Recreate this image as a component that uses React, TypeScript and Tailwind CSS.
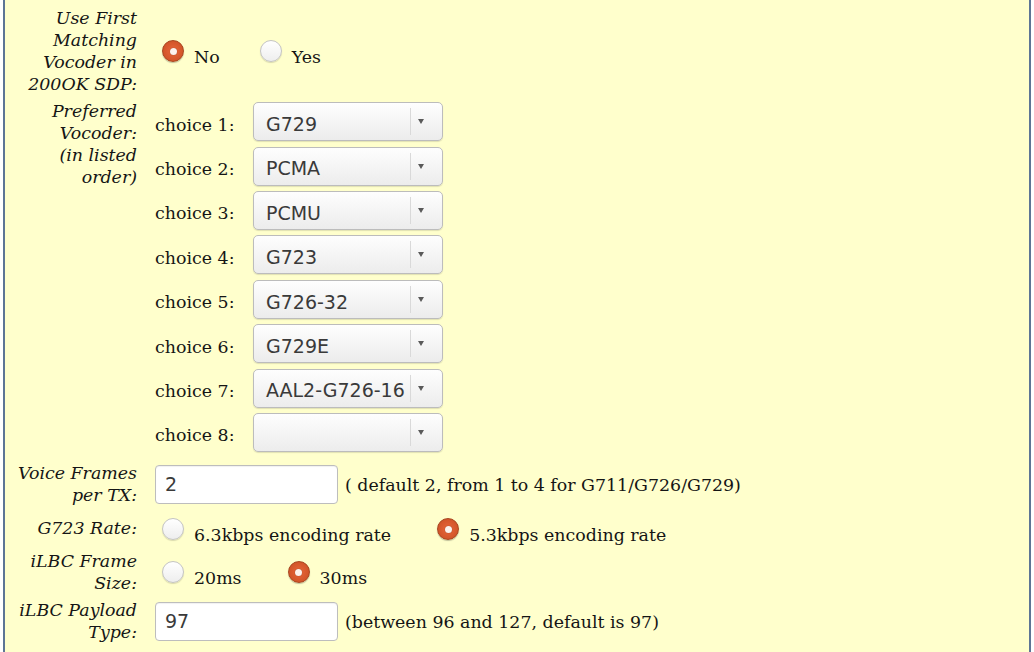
import React from "react";

const CHOICES = ["G729", "PCMA", "PCMU", "G723", "G726-32", "G729E", "AAL2-G726-16", ""];

function Radio({ checked }: { checked?: boolean }) {
  if (checked) {
    return (
      <span className="flex h-[22px] w-[22px] shrink-0 items-center justify-center rounded-full border border-[#a8451f] bg-radial from-[#e8673a] to-[#c94d22] shadow-[0_1px_1px_rgba(0,0,0,0.25)]">
        <span className="h-[7px] w-[7px] rounded-full bg-[#fdf3ee] shadow-[0_0_1px_rgba(0,0,0,0.4)]" />
      </span>
    );
  }
  return (
    <span className="h-[22px] w-[22px] shrink-0 rounded-full border border-[#c4c4c4] bg-linear-to-b from-white to-[#eeeeee] shadow-[0_1px_1px_rgba(0,0,0,0.15)]" />
  );
}

function Option({ checked, label, className = "" }: { checked?: boolean; label: string; className?: string }) {
  return (
    <div className={`flex items-center ${className}`}>
      <Radio checked={checked} />
      <span className="ml-[10px] mt-[11px]">{label}</span>
    </div>
  );
}

function Select({ value }: { value: string }) {
  return (
    <div className="mb-[5px] flex h-[39px] w-[190px] items-center rounded-[5px] border border-[#bcbcbc] bg-linear-to-b from-[#fefefe] to-[#ececec] shadow-[0_1px_1px_rgba(0,0,0,0.12)]">
      <span className="flex-1 pl-[12px] pt-[5px] font-[family-name:'DejaVu_Sans',sans-serif] text-[19px] text-[#3a3a3a]">{value}</span>
      <span className="h-[27px] w-px bg-[#d9d9d9]" />
      <span className="flex w-[31px] justify-start pl-[7px]">
        <span className="h-0 w-0 border-x-[3.5px] border-t-[5px] border-x-transparent border-t-[#5a5a5a]" />
      </span>
    </div>
  );
}

function TextBox({ value }: { value: string }) {
  return (
    <div className="flex h-[39px] w-[183px] items-center rounded-[4px] border border-[#bdbdbd] bg-white pl-[9px] font-[family-name:'DejaVu_Sans',sans-serif] text-[19px] text-[#3a3a3a] shadow-[inset_0_1px_1px_rgba(0,0,0,0.06)]">
      {value}
    </div>
  );
}

function Label({ lines }: { lines: string[] }) {
  return (
    <div className="w-[135px] shrink-0 pr-[3px] text-right italic leading-[22px]">
      {lines.map((l, i) => (
        <div key={i}>{l}</div>
      ))}
    </div>
  );
}

export default function App() {
  return (
    <div className="h-[652px] w-[1034px] overflow-hidden bg-white">
      <div className="ml-[3px] h-full w-[1028px] border-x-2 border-[#5d7595] bg-[#ffffcc] pt-[7px] font-[family-name:'DejaVu_Serif',serif] text-[17.4px] text-[#151515]">
        <div className="flex flex-col gap-[5px]">
          {/* use first matching vocoder */}
          <div className="flex items-center">
            <Label lines={["Use First", "Matching", "Vocoder in", "200OK SDP:"]} />
            <div className="flex items-center pl-[22px] pt-[1px]">
              <Option checked label="No" />
              <Option label="Yes" className="ml-[40px]" />
            </div>
          </div>

          {/* preferred vocoders */}
          <div className="flex items-start">
            <Label lines={["Preferred", "Vocoder:", "(in listed", "order)"]} />
            <div className="flex flex-col pl-[15px] pt-[2px]">
              {CHOICES.map((c, i) => (
                <div key={i} className="flex h-[44.4px] items-center">
                  <span className="mt-[1px] w-[98px]">choice {i + 1}:</span>
                  <Select value={c} />
                </div>
              ))}
            </div>
          </div>

          {/* voice frames */}
          <div className="flex items-center">
            <Label lines={["Voice Frames", "per TX:"]} />
            <div className="flex items-center pl-[15px]">
              <TextBox value="2" />
              <span className="ml-[7px] mt-[2px]">( default 2, from 1 to 4 for G711/G726/G729)</span>
            </div>
          </div>

          {/* g723 rate */}
          <div className="flex h-[34px] items-center">
            <Label lines={["G723 Rate:"]} />
            <div className="flex items-center pl-[22px] pt-[2px]">
              <Option label="6.3kbps encoding rate" />
              <Option checked label="5.3kbps encoding rate" className="ml-[46px]" />
            </div>
          </div>

          {/* ilbc frame size */}
          <div className="flex items-center">
            <Label lines={["iLBC Frame", "Size:"]} />
            <div className="flex items-center pl-[22px]">
              <Option label="20ms" />
              <Option checked label="30ms" className="ml-[46px]" />
            </div>
          </div>

          {/* ilbc payload */}
          <div className="flex items-center">
            <Label lines={["iLBC Payload", "Type:"]} />
            <div className="flex items-center pl-[15px]">
              <TextBox value="97" />
              <span className="ml-[7px] mt-[2px]">(between 96 and 127, default is 97)</span>
            </div>
          </div>
        </div>
      </div>
    </div>
  );
}
